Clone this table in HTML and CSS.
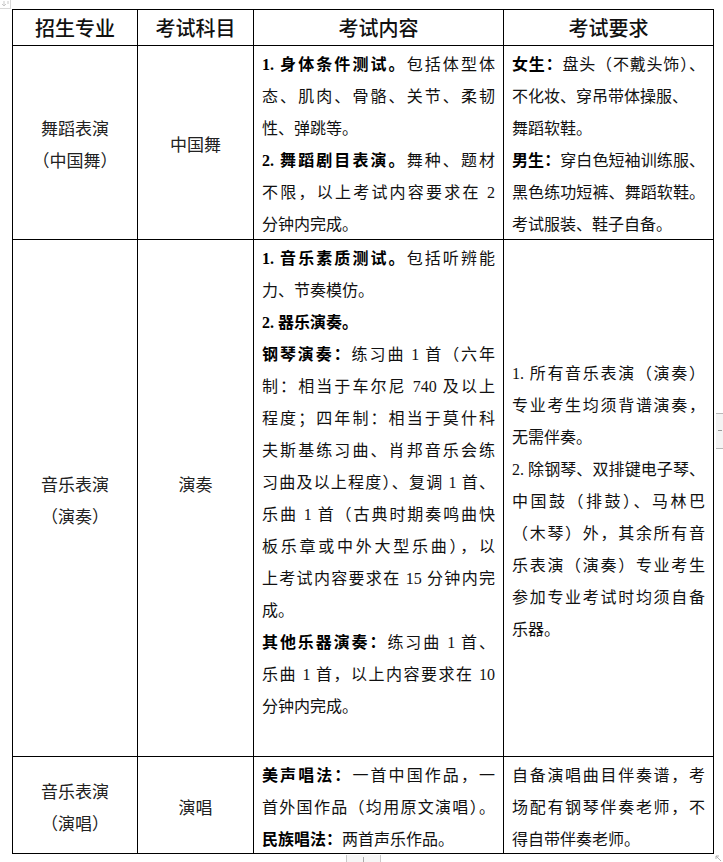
FILE: index.html
```html
<!DOCTYPE html>
<html lang="zh-CN">
<head>
<meta charset="utf-8">
<title>招生专业考试要求</title>
<link rel="stylesheet" href="styles.css">
</head>
<body>
<span class="handle" aria-hidden="true"><svg width="10" height="8" viewBox="0 0 10 8"><path d="M4 1v5M2 4l2 2 2-2M8 1v3" stroke="#c8c8c8" fill="none" stroke-width="1"/></svg></span>
<div class="sheet">
  <div class="cell head">招生专业</div>
  <div class="cell head">考试科目</div>
  <div class="cell head">考试内容</div>
  <div class="cell head">考试要求</div>

  <div class="cell mid big"><span>舞蹈表演</span><span>（中国舞）</span></div>
  <div class="cell mid big"><span>中国舞</span></div>
  <div class="cell top">
    <span class="ln"><b>1. 身体条件测试。</b>包括体型体</span>
    <span class="ln">态、肌肉、骨骼、关节、柔韧</span>
    <span class="ln end">性、弹跳等。</span>
    <span class="ln"><b>2. 舞蹈剧目表演。</b>舞种、题材</span>
    <span class="ln">不限，以上考试内容要求在 2</span>
    <span class="ln end">分钟内完成。</span>
  </div>
  <div class="cell top">
    <span class="ln"><b>女生：</b>盘头（不戴头饰）、</span>
    <span class="ln end">不化妆、穿吊带体操服、</span>
    <span class="ln end">舞蹈软鞋。</span>
    <span class="ln"><b>男生：</b>穿白色短袖训练服、</span>
    <span class="ln">黑色练功短裤、舞蹈软鞋。</span>
    <span class="ln end">考试服装、鞋子自备。</span>
  </div>

  <div class="cell mid big"><span>音乐表演</span><span>（演奏）</span></div>
  <div class="cell mid big"><span>演奏</span><span>&nbsp;</span></div>
  <div class="cell top">
    <span class="ln"><b>1. 音乐素质测试。</b>包括听辨能</span>
    <span class="ln end">力、节奏模仿。</span>
    <span class="ln end"><b>2. 器乐演奏。</b></span>
    <span class="ln"><b>钢琴演奏：</b>练习曲 1 首（六年</span>
    <span class="ln">制：相当于车尔尼 740 及以上</span>
    <span class="ln">程度；四年制：相当于莫什科</span>
    <span class="ln">夫斯基练习曲、肖邦音乐会练</span>
    <span class="ln">习曲及以上程度）、复调 1 首、</span>
    <span class="ln">乐曲 1 首（古典时期奏鸣曲快</span>
    <span class="ln">板乐章或中外大型乐曲），以</span>
    <span class="ln">上考试内容要求在 15 分钟内完</span>
    <span class="ln end">成。</span>
    <span class="ln"><b>其他乐器演奏：</b>练习曲 1 首、</span>
    <span class="ln">乐曲 1 首，以上内容要求在 10</span>
    <span class="ln end">分钟内完成。</span>
  </div>
  <div class="cell mid left">
    <span class="ln">1. 所有音乐表演（演奏）</span>
    <span class="ln">专业考生均须背谱演奏，</span>
    <span class="ln end">无需伴奏。</span>
    <span class="ln">2. 除钢琴、双排键电子琴、</span>
    <span class="ln">中国鼓（排鼓）、马林巴</span>
    <span class="ln">（木琴）外，其余所有音</span>
    <span class="ln">乐表演（演奏）专业考生</span>
    <span class="ln">参加专业考试时均须自备</span>
    <span class="ln end">乐器。</span>
  </div>

  <div class="cell mid big"><span>音乐表演</span><span>（演唱）</span></div>
  <div class="cell mid big"><span>演唱</span></div>
  <div class="cell top">
    <span class="ln"><b>美声唱法：</b>一首中国作品，一</span>
    <span class="ln">首外国作品（均用原文演唱）。</span>
    <span class="ln end"><b>民族唱法：</b>两首声乐作品。</span>
  </div>
  <div class="cell top">
    <span class="ln">自备演唱曲目伴奏谱，考</span>
    <span class="ln">场配有钢琴伴奏老师，不</span>
    <span class="ln end">得自带伴奏老师。</span>
  </div>
</div>
<span class="edge-tab" aria-hidden="true"></span>
<span class="foot-tab" aria-hidden="true"></span>
<span class="corner" aria-hidden="true"><svg width="7" height="7" viewBox="0 0 7 7"><path d="M1 1h3M1 1v3M1 1l5 5" stroke="#b0b0b0" fill="none" stroke-width="1"/></svg></span>
</body>
</html>
```

FILE: styles.css
```css
html, body {
  margin: 0;
  padding: 0;
  background: #fff;
}

body {
  position: relative;
  width: 723px;
  height: 862px;
  overflow: hidden;
  font-family: "Liberation Serif", "Noto Sans CJK SC", serif;
  font-size: 16px;
  color: #111;
}

.sheet {
  display: grid;
  grid-template-columns: 124px 115px 249px 209px;
  grid-template-rows: 35px 193px 516px 96px;
  gap: 1px;
  padding: 1px;
  background: #000;
  width: max-content;
  margin: 9px 0 0 12px;
}

.cell {
  background: #fff;
  line-height: 32px;
  display: flex;
  flex-direction: column;
  box-sizing: border-box;
}

.cell b {
  font-weight: 700;
  color: #000;
}

.head {
  align-items: center;
  justify-content: center;
  font-family: "Noto Sans CJK SC", sans-serif;
  font-size: 20px;
  font-weight: 500;
  color: #111;
  line-height: 28px;
  padding-top: 1px;
}

.mid {
  align-items: center;
  justify-content: center;
  padding-top: 7px;
}

.mid.big {
  font-size: 17px;
  color: #222;
}

.mid.left {
  align-items: stretch;
  padding-left: 8px;
  padding-right: 8px;
}

.top {
  justify-content: flex-start;
  padding: 3px 8px 0 8px;
}

.ln {
  display: block;
  text-align: justify;
  text-align-last: justify;
  white-space: nowrap;
}

.ln.end {
  text-align-last: left;
}

.handle {
  position: absolute;
  left: 0;
  top: 0;
  width: 10px;
  height: 8px;
  border-right: 1px solid #d8d8d8;
  border-bottom: 1px solid #d8d8d8;
  line-height: 0;
}

.edge-tab {
  position: absolute;
  left: 716px;
  top: 413px;
  width: 7px;
  height: 34px;
  border-top: 1px solid #b8b8b8;
  border-bottom: 1px solid #b8b8b8;
  background: #f4f4f4;
}

.edge-tab::after {
  content: "";
  position: absolute;
  left: 2px;
  top: 16px;
  width: 4px;
  height: 1px;
  background: #999;
}

.foot-tab {
  position: absolute;
  left: 346px;
  top: 855px;
  width: 33px;
  height: 8px;
  border-left: 1px solid #c8c8c8;
  border-right: 1px solid #c8c8c8;
  background: #f6f6f6;
}

.foot-tab::after {
  content: "";
  position: absolute;
  left: 16px;
  top: 2px;
  width: 1px;
  height: 6px;
  background: #aaa;
}

.corner {
  position: absolute;
  left: 715px;
  top: 855px;
  width: 8px;
  height: 7px;
  line-height: 0;
}
```
